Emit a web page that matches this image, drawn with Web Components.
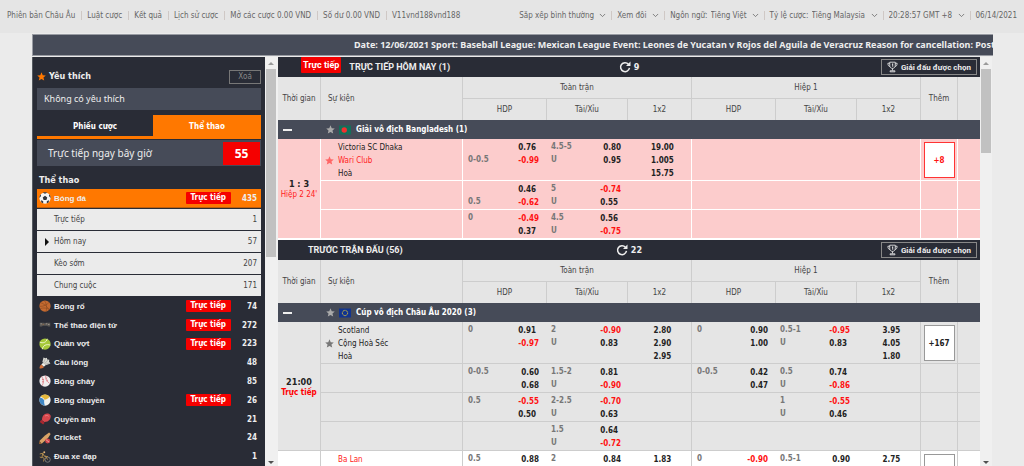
<!DOCTYPE html>
<html lang="vi">
<head>
<meta charset="utf-8">
<title>Thể thao</title>
<style>
  html, body { height: 100%; }
  body {
    margin: 0; background: #ebebeb; color: #222; overflow: hidden;
    font: 8px/13px "DejaVu Sans Condensed", "DejaVu Sans", sans-serif;
    --dark: #292c36; --slate: #464b58; --orange: #ff7800; --red: #f50000;
    --wide: "Noto Sans", sans-serif; --tight: Roboto, sans-serif;
  }
</style>
</head>
<body>
<sports-app></sports-app>
<script>
const define = (name, html, setup) => {
  const template = document.createElement('template');
  template.innerHTML = '<style>*{box-sizing:border-box}:host([hidden]){display:none}</style>' + html;
  customElements.define(name, class extends HTMLElement {
    connectedCallback() {
      if (this.shadowRoot) return;
      const root = this.attachShadow({ mode: 'open' });
      root.append(template.content.cloneNode(true));
      if (setup) setup(this, root);
    }
  });
};

/* ---------- icons ---------- */
const ICONS = {
  star: '<path fill="currentColor" d="M8 .6l2.2 5.1 5.4.4-4.1 3.6 1.300 5.500L8 12.300l-4.800 2.900 1.300-5.500L.4 6.100l5.400-.4z"/>',
  refresh: '<path fill="none" stroke="currentColor" stroke-width="2" d="M12.600 4.200A6 6 0 1 0 14 9.300"/><path fill="currentColor" d="M9.300 6.800h6V.8z"/>',
  trophy: '<path fill="none" stroke="currentColor" stroke-width="1.200" d="M4 1h8v4.500c0 3-1.800 4.500-4 4.500S4 8.500 4 5.500zM4 2.500H1.300C1.300 6 2.500 7 4.400 7.200M12 2.500h2.700c0 3.500-1.200 4.500-3.100 4.700M8 10v3M4.500 15v-1.500h7V15z"/><path fill="currentColor" d="M7.500 3H9v4.500H7.700V4.300H7z"/>',
  chevron: '<path fill="none" stroke="currentColor" stroke-width="1.800" d="M2 4.500l6 6 6-6"/>',
  soccer: '<circle cx="8" cy="8" r="7.500" fill="#f4f4f4"/><path fill="#30343c" d="M8 5l3 2.200-1.100 3.400H6.100L5 7.200zM5.200.9L8 2.200l2.800-1.300C9 .2 7 .2 5.200.9zM.5 8l2.200-2.800L2.500 3C1 4.500.4 6.300.5 8zM15.500 8l-2.200-2.800.2-2.200c1.500 1.500 2.100 3.300 2 5zM2.800 13.200l.4-2.700 2.500 2-.2 2.600c-1.100-.4-2-1-2.700-1.900zM13.200 13.200l-.4-2.700-2.500 2 .2 2.600c1.100-.4 2-1 2.700-1.900z"/>',
  basketball: '<circle cx="8" cy="8" r="7.500" fill="#c46a30"/><path fill="none" stroke="#8a4a20" stroke-width=".8" d="M2 3.500c4 1 9 5 11.500 9.500M.6 8.500C6 9 11 6 13.500 3M7 .6C10 4 11 10 9.500 15.300M1.500 11.500c4-1.500 9-1 12 1"/>',
  esports: '<path fill="#5b5855" d="M1 5h6l1 1 1-1h6v5h-3l-1-1H5l-1 1H1z"/><path fill="#a9a29a" d="M2 6h2v1H2zM9 6h2v1H9zM12 7h2v1h-2z"/><path fill="#c57a3c" d="M5 7h1v1H5z"/>',
  tennis: '<circle cx="8" cy="8" r="7.500" fill="#a6c83a"/><path fill="none" stroke="#eef5cc" stroke-width="1.300" d="M1 5.500c4 2 9 .5 10-4.500M4.500 15C5 10 10 7.500 15 9.500"/>',
  badminton: '<path fill="#d8d8d2" d="M4.500 6.500L6 .8l2.500 1 2-.8.5 2.300 2.800.5-.5 2.200 1.900 2.500L9 11z"/><path fill="none" stroke="#8a8a86" stroke-width=".6" d="M6 8L8.500 2M7.500 9L12 4M8 10l6-2"/><path fill="#f1efe8" d="M3 10l2.500-2.500 3.500 3L6.500 13z"/><path fill="#d4713a" d="M3 10l3.500 3.500C4 15.500 1 15.500.8 15 .5 14 1 12 3 10z"/>',
  baseball: '<circle cx="8" cy="8" r="7.500" fill="#f0eeee"/><path fill="none" stroke="#d8606a" stroke-width=".9" d="M3.500 2c2.500 3 3 8 1 12M9 .6c-.5 4 1 8 5 10.400M4 6h2.500M4 9h2.500M9 5l2-1.500M10 8l2-1.500"/>',
  volleyball: '<circle cx="8" cy="8" r="7.500" fill="#f2f2ee"/><path fill="#e6b93c" d="M2 3.500C5-.5 11-.5 14 3.500 12 7 9 7 7.500 7.500 6 5 4 4 2 3.500z"/><path fill="#3f86c4" d="M1.500 4.500C4 5 6 6.500 7 8.500c-.5 3 0 5 1 7C3 15.500-1.500 10 1.500 4.500z"/>',
  boxing: '<path fill="#d8474d" d="M7 2c3-2 7-1.500 8.300 1 1.200 3-1 7-4 8.300L7 12 4 9.500C4 6 5 3.500 7 2z"/><path fill="#a8272f" d="M3 9l4.500 4-2 2.200L1 12z"/><path fill="none" stroke="#f08a8a" stroke-width="1" d="M8 4c2-1 4-1 5 .5"/>',
  cricket: '<path fill="#d9a366" d="M13.500.5l2 2L12 8l-8.500 7.500L.5 12 8 4.500z"/><path fill="#94602f" d="M.5 12l3 3.500L2.500 16H0z"/><circle cx="11.500" cy="12" r="3.300" fill="#d3454b"/><path fill="none" stroke="#f3b9b9" d="M9.500 10.500l4 3"/>',
  cycling: '<g fill="none" stroke="#8f8f8c" stroke-width="1"><circle cx="11.500" cy="11.500" r="3.500"/></g><path fill="none" stroke="#b9924f" stroke-width="1.200" d="M1 4l4-1 2 4 5 .5M5 3L4 8l3 2-1 4M8 6l3.500 5.500M1 8l3 1"/><circle cx="7" cy="1.700" r="1.300" fill="#e2b477"/>',
  bd: '<path fill="#12705a" d="M0 2h16v12H0z"/><circle cx="7" cy="8" r="3.600" fill="#f3302f"/>',
  eu: '<path fill="#11348f" d="M0 2h16v12H0z"/><circle cx="8" cy="8" r="3.500" fill="none" stroke="#f2d430" stroke-width="1.300" stroke-dasharray="1.200 .7"/>'
};
define('x-icon', `
  <style>
    :host { display: inline-flex; flex: none; width: 12px; height: 12px; }
    svg { width: 100%; height: 100%; display: block; }
  </style><svg viewBox="0 0 16 16" aria-hidden="true"></svg>`,
  (el, root) => { root.querySelector('svg').innerHTML = ICONS[el.getAttribute('name')]; });

/* ---------- small parts ---------- */
define('live-badge', `
  <style>
    :host { display: inline-block; background: var(--red); color: #fff; font-weight: bold;
            line-height: 12px; padding: 0 5px; border-radius: 1px; white-space: nowrap; }
  </style><slot>Trực tiếp</slot>`);

define('scroll-rail', `
  <style>
    :host { display: flex; flex-direction: column; flex: none; width: 12px; padding: 0 1px; background: #f0f0f0; }
    i { height: 12px; display: grid; place-items: center; flex: none; }
    i::before { content: ""; border: 3px solid transparent; border-top: 0; border-bottom: 3px solid #9a9a9a; }
    i.down { height: 8px; margin-top: auto; }
    i.down::before { border-bottom: 0; border-top: 3px solid #505050; }
    b { background: #c1c1c1; height: var(--thumb); }
  </style><i></i><b></b><i class="down"></i>`,
  (el, root) => root.querySelector('b').style.setProperty('--thumb', el.getAttribute('thumb')));

define('menu-select', `
  <style>
    :host { display: inline-flex; align-items: center; gap: 5px; }
    label { display: inline-flex; gap: 3px; }
    select { appearance: none; border: 0; margin: 0; padding: 0; background: none; color: inherit; font: inherit; }
    x-icon { width: 7px; height: 7px; }
  </style>
  <label><span></span><select><option></option></select></label><x-icon name="chevron"></x-icon>`,
  (el, root) => {
    const span = root.querySelector('span');
    if (el.hasAttribute('label')) span.textContent = el.getAttribute('label'); else span.remove();
    root.querySelector('option').textContent = el.getAttribute('value');
    root.querySelector('select').setAttribute('aria-label', el.getAttribute('label') || el.getAttribute('value'));
  });

define('top-bar', `
  <style>
    :host { display: flex; justify-content: space-between; align-items: center; height: 33px; flex: none;
            padding: 0 7px 3px; background: #e5e5e5; color: #666; white-space: nowrap; }
    nav, div { display: flex; align-items: center; }
    nav > *, div > * { padding: 0 5px; border-left: 1px solid #cfc8c5; line-height: 9px; }
    nav > * { padding: 0 6px 0 5px; }
    nav > :first-child, div > :first-child { border: 0; padding-left: 0; }
    div > :last-child { padding-right: 0; }
    a { color: inherit; text-decoration: none; }
  </style>
  <nav>
    <a href="#">Phiên bản Châu Âu</a><a href="#">Luật cược</a><a href="#">Kết quả</a><a href="#">Lịch sử cược</a>
    <a href="#">Mở các cược 0.00 VND</a><span>Số dư 0.00 VND</span><span>V11vnd188vnd188</span>
  </nav>
  <div>
    <menu-select value="Sắp xếp bình thường"></menu-select>
    <menu-select value="Xem đôi"></menu-select>
    <menu-select label="Ngôn ngữ:" value="Tiếng Việt"></menu-select>
    <menu-select label="Tỷ lệ cược:" value="Tiếng Malaysia"></menu-select>
    <menu-select value="20:28:57 GMT +8"></menu-select>
    <span>06/14/2021</span>
  </div>`);

define('news-ticker', `
  <style>
    :host { display: block; flex: none; height: 22px; overflow: hidden; white-space: nowrap;
            margin: 1px 31px 0 32px; padding-left: 321px; background: var(--slate); color: #eee;
            border: 1px solid #989ba2; border-right: 0;
            font-family: var(--wide); font-weight: bold; font-size: 9px; line-height: 20px; }
  </style><slot></slot>`);

/* ---------- sidebar ---------- */
define('sub-item', `
  <style>
    :host { display: block; border-bottom: 1px solid var(--dark); }
    a { display: flex; align-items: center; height: 21px; padding: 0 4px 0 17px; position: relative;
        background: #ebebeb; color: #444; text-decoration: none; }
    span { margin-left: auto; }
    :host([current]) a::before { content: ""; position: absolute; left: 8px; border: 4px solid transparent; border-left-color: #111; border-right: 0; }
  </style><a href="#"><slot></slot><span></span></a>`,
  (el, root) => { root.querySelector('span').textContent = el.getAttribute('count'); });

define('sport-item', `
  <style>
    :host { display: flex; color: #eee; font-weight: bold; }
    a { flex: 1; display: flex; align-items: center; padding: 0 4px 0 2px; color: inherit; text-decoration: none; }
    x-icon { margin-right: 3px; }
    .name { font-family: "Liberation Sans", sans-serif; }
    live-badge { margin-left: auto; }
    .count { width: 26px; margin-left: auto; text-align: right; }
    live-badge + .count { margin-left: 0; }
    :host([selected]) { height: 19px; background: var(--orange); border-bottom: 1px solid #c05f0c; margin-bottom: 1px; }
  </style>
  <a href="#"><span class="icon"></span><span class="name"><slot></slot></span><live-badge></live-badge><span class="count"></span></a>`,
  (el, root) => {
    root.querySelector('.icon').outerHTML = `<x-icon name="${el.getAttribute('icon')}"></x-icon>`;
    if (!el.hasAttribute('live')) root.querySelector('live-badge').remove();
    root.querySelector('.count').textContent = el.getAttribute('count');
  });

define('side-panel', `
  <style>
    :host { display: flex; flex-direction: column; width: 233px; flex: none; background: var(--dark);
            color: #eee; padding: 12px 4px 0; border-left: 1px solid #555a60; }
    button { font: inherit; color: inherit; border: 0; padding: 0; margin: 0; background: none; }
    h2 { margin: 0; font-size: 9px; font-weight: bold; }
    .fav { display: flex; align-items: center; justify-content: space-between; height: 15px; margin-bottom: 4px; }
    .fav h2 { display: flex; align-items: center; gap: 3px; }
    .fav x-icon { width: 9px; height: 9px; color: var(--orange); }
    .fav button { width: 32px; height: 14px; line-height: 11px; border: 1px solid #777; color: #888; }
    .none { height: 22px; line-height: 22px; padding-left: 7px; background: var(--slate); font-family: var(--wide); font-size: 9px; }
    .tabs { display: flex; margin-top: 5px; height: 24px; border-bottom: 3px solid var(--orange); }
    .tabs button { flex: 116; font-weight: bold; color: #fff; padding-top: 1px; }
    .tabs .on { flex: 108; background: var(--orange); }
    .now { display: flex; align-items: center; justify-content: space-between; height: 26px; margin-top: 1px; padding: 1px 1px 1px 11px;
           background: var(--slate); font-family: var(--wide); font-size: 10px; }
    .now b { background: var(--red); width: 37px; line-height: 23px; text-align: center; font-size: 12px; color: #fff; }
    .head { line-height: 13px; margin: 8px 0 2px 2px; }
    .rest { flex: 1; display: grid; grid-auto-rows: 1fr; }
  </style>
  <div class="fav"><h2><x-icon name="star"></x-icon>Yêu thích</h2><button>Xoá</button></div>
  <div class="none">Không có yêu thích</div>
  <div class="tabs"><button>Phiếu cược</button><button class="on">Thể thao</button></div>
  <div class="now">Trực tiếp ngay bây giờ<b>55</b></div>
  <h2 class="head">Thể thao</h2>
  <sport-item icon="soccer" count="435" live selected>Bóng đá</sport-item>
  <sub-item count="1">Trực tiếp</sub-item>
  <sub-item count="57" current>Hôm nay</sub-item>
  <sub-item count="207">Kèo sớm</sub-item>
  <sub-item count="171">Chung cuộc</sub-item>
  <div class="rest">
    <sport-item icon="basketball" count="74" live>Bóng rổ</sport-item>
    <sport-item icon="esports" count="272" live>Thể thao điện tử</sport-item>
    <sport-item icon="tennis" count="223" live>Quần vợt</sport-item>
    <sport-item icon="badminton" count="48">Cầu lông</sport-item>
    <sport-item icon="baseball" count="85">Bóng chày</sport-item>
    <sport-item icon="volleyball" count="26" live>Bóng chuyền</sport-item>
    <sport-item icon="boxing" count="21">Quyền anh</sport-item>
    <sport-item icon="cricket" count="24">Cricket</sport-item>
    <sport-item icon="cycling" count="1">Đua xe đạp</sport-item>
  </div>`);

/* ---------- odds ---------- */
define('section-bar', `
  <style>
    :host { display: grid; grid-template-columns: 1fr auto 1fr; height: 20px; background: var(--dark); color: #eee; font-weight: bold; }
    .title { display: flex; align-items: center; padding-left: 30px; font-family: var(--tight); font-size: 9px; }
    :host([live]) .title { padding-left: 23px; gap: 8px; }
    live-badge { align-self: flex-start; line-height: 16px; padding: 0 2px; }
    .count { display: flex; align-items: center; gap: 3px; font-size: 9px; }
    button { justify-self: end; align-self: center; display: flex; align-items: center; gap: 3px; height: 16px; margin-right: 3px; padding: 0 5px;
             background: none; border: 1px solid #888; color: #eee; font: inherit; font-weight: bold; font-family: var(--tight); }
    button x-icon { width: 11px; }
  </style>
  <div class="title"><live-badge></live-badge><span><slot></slot></span></div>
  <div class="count"><x-icon name="refresh"></x-icon><span></span></div>
  <button><x-icon name="trophy"></x-icon>Giải đấu được chọn</button>`,
  (el, root) => {
    if (!el.hasAttribute('live')) root.querySelector('live-badge').remove();
    root.querySelector('.count span').textContent = el.getAttribute('count');
  });

const GAMES = {
  bangladesh: [{
    live: true, time: '1 : 3', note: "Hiệp 2 24'", more: '+8', teams: ['Victoria SC Dhaka', 'Wari Club', 'Hoà'],
    rows: [
      [[['', '0-0.5'], ['0.76', '-0.99']], [['4.5-5', 'U'], ['0.80', '0.95']], ['19.00', '1.005', '15.75'], null, null, null],
      [[['', '0.5'], ['0.46', '-0.62']], [['5', 'U'], ['-0.74', '0.55']], null, null, null, null],
      [[['0', ''], ['-0.49', '0.37']], [['4.5', 'U'], ['0.56', '-0.75']], null, null, null, null]
    ]
  }],
  euro: [{
    time: '21:00', note: 'Trực tiếp', strong: true, more: '+167', teams: ['Scotland', 'Cộng Hoà Séc', 'Hoà'],
    rows: [
      [[['0', ''], ['0.91', '-0.97']], [['2', 'U'], ['-0.90', '0.83']], ['2.80', '2.90', '2.95'], [['0', ''], ['0.90', '1.00']], [['0.5-1', 'U'], ['-0.95', '0.83']], ['3.95', '4.05', '1.80']],
      [[['0-0.5', ''], ['0.60', '0.68']], [['1.5-2', 'U'], ['0.81', '-0.90']], null, [['0-0.5', ''], ['0.42', '0.47']], [['0.5', 'U'], ['0.74', '-0.86']], null],
      [[['0.5', ''], ['-0.55', '0.50']], [['2-2.5', 'U'], ['-0.70', '0.63']], null, null, [['1', 'U'], ['-0.55', '0.46']], null],
      [null, [['1.5', 'U'], ['0.64', '-0.72']], null, null, null, null]
    ]
  }, {
    white: true, time: '', note: '', more: '', teams: ['Ba Lan'], hot: 0,
    rows: [[[['0.5'], ['0.88']], [['2'], ['0.84']], ['1.83'], [['0'], ['-0.90']], [['0.5-1'], ['0.90']], ['2.75']]]
  }]
};
const value = v => `<div${v[0] === '-' ? ' class="neg"' : ''}>${v}</div>`;
const cell = (c, i) => {
  const cls = ['hdp', 'ou', 'win'][i % 3] + (i % 3 === 2 ? ' end' : '');
  if (!c) return `<td class="${cls}"></td>`;
  if (i % 3 === 2) return `<td class="${cls}">${c.map(value).join('')}</td>`;
  return `<td class="${cls}"><div class="pair"><div class="line">${c[0].map(l => `<div>${l}</div>`).join('')}</div><div class="val">${c[1].map(value).join('')}</div></div></td>`;
};
const gameBody = g => {
  const hot = g.live ? 1 : g.hot;
  const teams = g.teams.map((t, i) => `<div class="team${i === hot ? ' hot' : ''}"><i>${i === 1 ? '<x-icon name="star"></x-icon>' : ''}</i>${t}</div>`).join('');
  return `<tbody class="${g.live ? 'live' : g.white ? 'white' : ''}">` + g.rows.map((r, n) => '<tr>' +
    (n ? '' : `<td class="time end" rowspan="${g.rows.length}"><b>${g.time}</b><div class="${g.strong ? 'strong' : ''}">${g.note}</div></td>`) +
    `<td class="event end">${n ? '' : teams}</td>` + r.map(cell).join('') +
    `<td class="more end">${n ? '' : `<button aria-label="Thêm">${g.more}</button>`}</td><td></td></tr>`).join('') + '</tbody>';
};

define('odds-table', `
  <style>
    :host { display: block; }
    table { width: 100%; table-layout: fixed; border-collapse: separate; border-spacing: 0; background: #e5e5e5; --line: #cdcdcd; }
    col.time-col { width: 43px; } col.hdp-col { width: 84px; } col.ou-col { width: 81px; } col.win-col { width: 64px; }
    col.more-col { width: 37px; } col.rest-col { width: 22px; }
    th { font-weight: normal; color: #444; padding: 0; border: 0 solid var(--line); border-right-width: 1px; height: 21px; text-align: center; }
    th.group { height: 22px; border-bottom-width: 1px; }
    th.left { text-align: left; padding-left: 7px; }
    th.none { border-right: 0; }
    .league td { height: 19px; background: var(--slate); padding: 0; color: #fff; border: 0; vertical-align: middle; }
    .league div { display: flex; align-items: center; font-weight: bold; padding-left: 5px; }
    .league button { width: 9px; height: 9px; padding: 0; margin: 0 34px 0 0; border: 0; background: linear-gradient(#eee, #eee) center / 9px 2px no-repeat; }
    .league .flag { width: 12px; height: 12px; margin: 0 5px 0 4px; }
    .league .star { width: 9px; height: 9px; color: #aaa; }
    td { vertical-align: top; padding: 2px 0 0; border-bottom: 1px solid var(--line); height: 29px; }
    td.end { border-right: 1px solid var(--line); }
    .time { text-align: center; vertical-align: middle; line-height: 10px; padding: 2px 0 0; color: #f22; white-space: nowrap; }
    .time b { font-size: 9px; color: #222; }
    .strong { font-weight: bold; color: #f00; }
    .team { display: flex; padding-left: 4px; }
    .team i { width: 13px; display: flex; align-items: center; color: #777; }
    .team x-icon { width: 9px; height: 9px; }
    .hot { color: #f22; }
    .live .team i { color: #f66; }
    .hdp, .ou { padding-top: 1px; }
    .pair { display: flex; justify-content: space-between; font-weight: bold; padding: 0 8px 0 5px; }
    .ou .pair { padding: 0 7px 0 4px; }
    .line { color: #777; } .val { padding-top: 1px; }
    .line div, .val div { min-height: 13px; }
    .win { font-weight: bold; text-align: center; padding-left: 6px; }
    .neg { color: #f11; }
    .more { text-align: center; }
    .more button { width: 31px; height: 36px; margin: 1px 0 0; padding: 0; background: #fff; border: 1px solid #999; color: #222; font: inherit; font-weight: bold; display: inline-block; vertical-align: top; }
    .live { --line: #fff; }
    .live td { background: #fccccc; }
    .live .more button { border-color: #f33; color: #f11; }
    .white td { background: #fff; }
  </style>
  <table>
    <colgroup><col class="time-col"><col><col class="hdp-col"><col class="ou-col"><col class="win-col"><col class="hdp-col"><col class="ou-col"><col class="win-col"><col class="more-col"><col class="rest-col"></colgroup>
    <thead>
      <tr><th rowspan="2">Thời gian</th><th rowspan="2" class="left">Sự kiện</th><th colspan="3" class="group">Toàn trận</th><th colspan="3" class="group">Hiệp 1</th><th rowspan="2">Thêm</th><th rowspan="2" class="none"></th></tr>
      <tr><th>HDP</th><th>Tài/Xỉu</th><th>1x2</th><th>HDP</th><th>Tài/Xỉu</th><th>1x2</th></tr>
    </thead>
    <tbody class="league"><tr><td colspan="10"><div><button aria-label="Thu gọn"></button><x-icon class="star" name="star"></x-icon><span></span><slot></slot></div></td></tr></tbody>
  </table>`,
  (el, root) => {
    root.querySelector('.league span').outerHTML = `<x-icon class="flag" name="${el.getAttribute('flag')}"></x-icon>`;
    root.querySelector('table').insertAdjacentHTML('beforeend', GAMES[el.getAttribute('games')].map(gameBody).join(''));
  });

define('sports-app', `
  <style>
    :host { display: flex; flex-direction: column; height: 100vh; border-bottom: 1px solid #1d1a26; }
    .body { flex: 1; min-height: 0; display: flex; margin: 1px 32px 0; background: #f0f0f0; }
    main { flex: 1; min-width: 0; overflow: hidden; margin-left: 1px; background: #fff; }
    section + section { margin-top: 1px; }
  </style>
  <top-bar></top-bar>
  <news-ticker>Date: 12/06/2021 Sport: Baseball League: Mexican League Event: Leones de Yucatan v Rojos del Aguila de Veracruz Reason for cancellation: Postpo</news-ticker>
  <div class="body">
    <side-panel></side-panel>
    <scroll-rail thumb="188px"></scroll-rail>
    <main>
      <section><section-bar live count="9">TRỰC TIẾP HÔM NAY (1)</section-bar>
        <odds-table games="bangladesh" flag="bd">Giải vô địch Bangladesh (1)</odds-table></section>
      <section><section-bar count="22">TRƯỚC TRẬN ĐẤU (56)</section-bar>
        <odds-table games="euro" flag="eu">Cúp vô địch Châu Âu 2020 (3)</odds-table></section>
    </main>
    <scroll-rail thumb="84px"></scroll-rail>
  </div>`);
</script>
</body>
</html>
